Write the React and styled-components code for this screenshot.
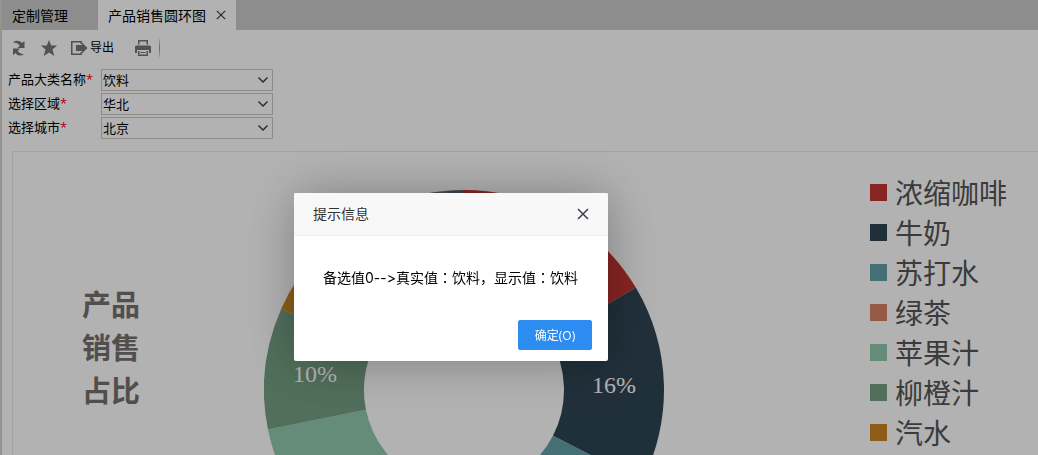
import React, { useState } from "react";
import styled, { createGlobalStyle } from "styled-components";

const GlobalStyle = createGlobalStyle`
  * {
    box-sizing: border-box;
  }

  body {
    margin: 0;
    overflow: hidden;
    background: #fff;
    color: #000;
    font-family: "Open Sans", "Noto Sans CJK SC", sans-serif;
    font-size: 14px;
  }

  button, select {
    font-family: inherit;
    color: inherit;
  }
`;

const params = [
  { id: "category", label: "产品大类名称", options: ["饮料", "日用品"] },
  { id: "region", label: "选择区域", options: ["华北", "华东"] },
  { id: "city", label: "选择城市", options: ["北京", "天津"] },
];

const legend = [
  { name: "浓缩咖啡", color: "#c23531" },
  { name: "牛奶", color: "#2f4554" },
  { name: "苏打水", color: "#61a0a8" },
  { name: "绿茶", color: "#d48265" },
  { name: "苹果汁", color: "#91c7ae" },
  { name: "柳橙汁", color: "#749f83" },
  { name: "汽水", color: "#ca8622" },
];

// start / end are degrees, clockwise from the top
const slices = [
  { start: 0, end: 59.2, color: "#c23531" },
  { start: 59.2, end: 117.2, color: "#2f4554", label: "16%" },
  { start: 117.2, end: 165, color: "#61a0a8" },
  { start: 165, end: 205, color: "#d48265" },
  { start: 205, end: 258.6, color: "#91c7ae" },
  { start: 258.6, end: 294, color: "#749f83", label: "10%" },
  { start: 294, end: 325, color: "#ca8622" },
  { start: 325, end: 355, color: "#6e7074" },
  { start: 355, end: 360, color: "#546570" },
];

const point = (deg, r) => {
  const a = (deg * Math.PI) / 180;
  return [200 + r * Math.sin(a), 200 - r * Math.cos(a)];
};

const slicePath = ({ start, end }) =>
  `M${point(start, 200)} A200 200 0 0 1 ${point(end, 200)} L${point(end, 100)} A100 100 0 0 0 ${point(start, 100)}Z`;

const Donut = () => (
  <DonutSvg viewBox="0 0 400 400" role="img" aria-label="产品销售圆环图">
    {slices.map((s) => {
      const [x, y] = point((s.start + s.end) / 2, 150);
      return (
        <g key={s.start}>
          <path d={slicePath(s)} fill={s.color} />
          {s.label && (
            <text x={x} y={y} dy="8">
              {s.label}
            </text>
          )}
        </g>
      );
    })}
  </DonutSvg>
);

const CloseIcon = ({ size }) => (
  <svg width={size} height={size} viewBox="0 0 12 12" fill="none" stroke="currentColor" strokeWidth="1.5">
    <path d="M1 1l10 10M11 1L1 11" />
  </svg>
);

const Toolbar = () => (
  <ToolbarRow>
    <ToolButton aria-label="刷新">
      <svg width="16" height="16" viewBox="0 0 16 16" fill="currentColor">
        <path d="M2 2.500C4 .2 8.500-.2 11 3l2.500-2V8H6.500l2.200-2.400C7.500 3.600 5 2.600 2 2.500z" />
        <path d="M13 14.300c-2.500 2-6.500 1.700-8.500-1.300L2 15.300V8.500h7L6.800 10.700c1.200 2.300 3.500 3.400 6.200 3.600z" />
      </svg>
    </ToolButton>
    <ToolButton aria-label="收藏">
      <svg width="16" height="16" viewBox="0 0 16 16" fill="currentColor">
        <path d="M8 0l2.200 5.600H16l-4.500 4L13.300 16 8 12.500 2.700 16l1.800-6.400L0 5.600h5.800z" />
      </svg>
    </ToolButton>
    <ToolButton>
      <svg width="17" height="16" viewBox="0 0 17 16" fill="currentColor">
        <path d="M0 1h11v3H9.500V2.500h-8v11h8V12H11v3H0z" />
        <path d="M5 5h6V2.500L16.500 8 11 13.500V11H5z" />
      </svg>
      <span>导出</span>
    </ToolButton>
    <ToolButton aria-label="打印">
      <svg width="16" height="16" viewBox="0 0 16 16" fill="currentColor">
        <path d="M3 0h10v4.500h-1.500v-3h-7v3H3z" />
        <path d="M1 5.500h14l1 1V13h-2v-3H2v3H0V6.500z" />
        <path d="M3 11h1.500v3.500h7V11H13v5H3zM5.500 12h5v1h-5z" />
      </svg>
    </ToolButton>
    <Divider />
  </ToolbarRow>
);

const ParamField = ({ id, label, options }) => (
  <>
    <ParamLabel htmlFor={id}>
      {label}
      <Required>*</Required>
    </ParamLabel>
    <SelectBox>
      <select id={id}>
        {options.map((o) => (
          <option key={o}>{o}</option>
        ))}
      </select>
      <svg width="12" height="12" viewBox="0 0 12 12" fill="none" stroke="#333" strokeWidth="1.3">
        <path d="M1.500 3.500L6 8l4.500-4.500" />
      </svg>
    </SelectBox>
  </>
);

const MessageDialog = ({ onClose }) => (
  <Overlay>
    <Dialog role="dialog" aria-labelledby="dialog-title">
      <DialogHeader>
        <span id="dialog-title">提示信息</span>
        <IconButton aria-label="关闭" onClick={onClose}>
          <CloseIcon size={12} />
        </IconButton>
      </DialogHeader>
      <DialogBody>
        备选值0--&gt;真实值<Colon>：</Colon>饮料，显示值<Colon>：</Colon>饮料
      </DialogBody>
      <DialogFooter>
        <ConfirmButton onClick={onClose}>确定(O)</ConfirmButton>
      </DialogFooter>
    </Dialog>
  </Overlay>
);

const App = () => {
  const [open, setOpen] = useState(true);

  return (
    <Page>
      <GlobalStyle />
      <TabBar>
        <Tab>定制管理</Tab>
        <Tab $active>
          产品销售圆环图
          <IconButton aria-label="关闭标签">
            <CloseIcon size={10} />
          </IconButton>
        </Tab>
      </TabBar>
      <Toolbar />
      <ParamForm>
        {params.map((p) => (
          <ParamField key={p.id} {...p} />
        ))}
      </ParamForm>
      <ChartPanel>
        <ChartTitle>
          产品
          <br />
          销售
          <br />
          占比
        </ChartTitle>
        <Donut />
        <Legend>
          {legend.map((item) => (
            <LegendItem key={item.name} $color={item.color}>
              {item.name}
            </LegendItem>
          ))}
        </Legend>
      </ChartPanel>
      {open && <MessageDialog onClose={() => setOpen(false)} />}
    </Page>
  );
};

const Page = styled.div`
  height: 100vh;
  display: flex;
  flex-direction: column;
  overflow: hidden;
  border-left: 2px solid #d6d5cd;
`;

const TabBar = styled.div`
  display: flex;
  flex: none;
  height: 30px;
  background: #cbcbcb;
`;

const Tab = styled.div`
  display: flex;
  align-items: center;
  gap: 10px;
  padding: 0 10px;
  min-width: 96px;
  background: ${({ $active }) => ($active ? "#fff" : "transparent")};
`;

const IconButton = styled.button`
  display: flex;
  padding: 0;
  border: 0;
  background: none;
  color: #3d3f4a;
  cursor: pointer;
`;

const ToolbarRow = styled.div`
  display: flex;
  flex: none;
  align-items: center;
  gap: 14px;
  height: 36px;
  padding: 0 9px;
`;

const ToolButton = styled.button`
  display: flex;
  align-items: center;
  gap: 2px;
  padding: 0;
  border: 0;
  background: none;
  color: #6f777b;
  font-size: 12px;
  line-height: 16px;

  span {
    color: #000;
    margin-right: 7px;
  }
`;

const Divider = styled.i`
  width: 1px;
  height: 18px;
  margin-left: -6px;
  background: linear-gradient(#ddd, #999, #ddd);
`;

const ParamForm = styled.form`
  display: grid;
  flex: none;
  grid-template-columns: 91px 172px;
  grid-auto-rows: 22px;
  gap: 2px;
  align-items: center;
  padding: 3px 6px 12px;
  font-size: 13px;
  white-space: nowrap;
`;

const ParamLabel = styled.label`
  line-height: 20px;
  padding-bottom: 2px;
`;

const Required = styled.span`
  color: #f00;
`;

const SelectBox = styled.div`
  position: relative;

  select {
    display: block;
    width: 100%;
    height: 22px;
    padding: 0 20px 0 1px;
    appearance: none;
    border: 1px solid #cbc9c0;
    border-radius: 0;
    background: #fff;
    font-size: 13px;
  }

  svg {
    position: absolute;
    right: 4px;
    top: 5px;
    pointer-events: none;
  }
`;

const ChartPanel = styled.div`
  flex: 1;
  min-height: 0;
  display: grid;
  grid-template-columns: 251px 1fr 168px;
  align-items: start;
  margin-left: 10px;
  border: 1px solid #e8e8e8;
  border-width: 1px 0 0 1px;
`;

const ChartTitle = styled.h1`
  margin: 0;
  padding: 131px 0 0 69px;
  color: #757070;
  font-size: 29px;
  line-height: 43px;
`;

const DonutSvg = styled.svg`
  width: 400px;
  margin-top: 38px;

  text {
    fill: #fff;
    font-family: "Liberation Serif", serif;
    font-size: 24px;
    text-anchor: middle;
  }
`;

const Legend = styled.ul`
  margin: 0;
  padding: 20px 0 0;
  list-style: none;
`;

const LegendItem = styled.li`
  display: flex;
  align-items: center;
  gap: 8px;
  height: 40px;
  color: #555;
  font-size: 28px;
  white-space: nowrap;

  &::before {
    content: "";
    width: 17px;
    height: 17px;
    background: ${({ $color }) => $color};
  }
`;

const Overlay = styled.div`
  position: fixed;
  inset: 0;
  display: flex;
  align-items: flex-start;
  justify-content: center;
  padding: 193px 136px 0 0;
  background: rgba(0, 0, 0, 0.3);
`;

const Dialog = styled.div`
  width: 314px;
  border-radius: 2px;
  background: #fff;
  box-shadow: 1px 1px 50px rgba(0, 0, 0, 0.3);
`;

const DialogHeader = styled.div`
  display: flex;
  align-items: center;
  justify-content: space-between;
  height: 43px;
  padding: 0 19px;
  border-bottom: 1px solid #eee;
  border-radius: 2px 2px 0 0;
  background: #f8f8f8;
  color: #333;
  line-height: 22px;
`;

const DialogBody = styled.div`
  padding: 30px 0 31px 29px;
  font-family: Inter, "Noto Sans CJK SC", sans-serif;
  font-feature-settings: "calt" 0;
  line-height: 22px;
  white-space: nowrap;
`;

// the SC face sets this mark to the left of its box
const Colon = styled.span`
  font-family: "Noto Sans CJK JP", sans-serif;
`;

const DialogFooter = styled.div`
  display: flex;
  justify-content: flex-end;
  padding: 0 16px 11px;
`;

const ConfirmButton = styled.button`
  width: 74px;
  height: 30px;
  border: 1px solid #2d8cf0;
  border-radius: 2px;
  background: #2d8cf0;
  color: #fff;
  font-size: 12px;
`;

export default App;
